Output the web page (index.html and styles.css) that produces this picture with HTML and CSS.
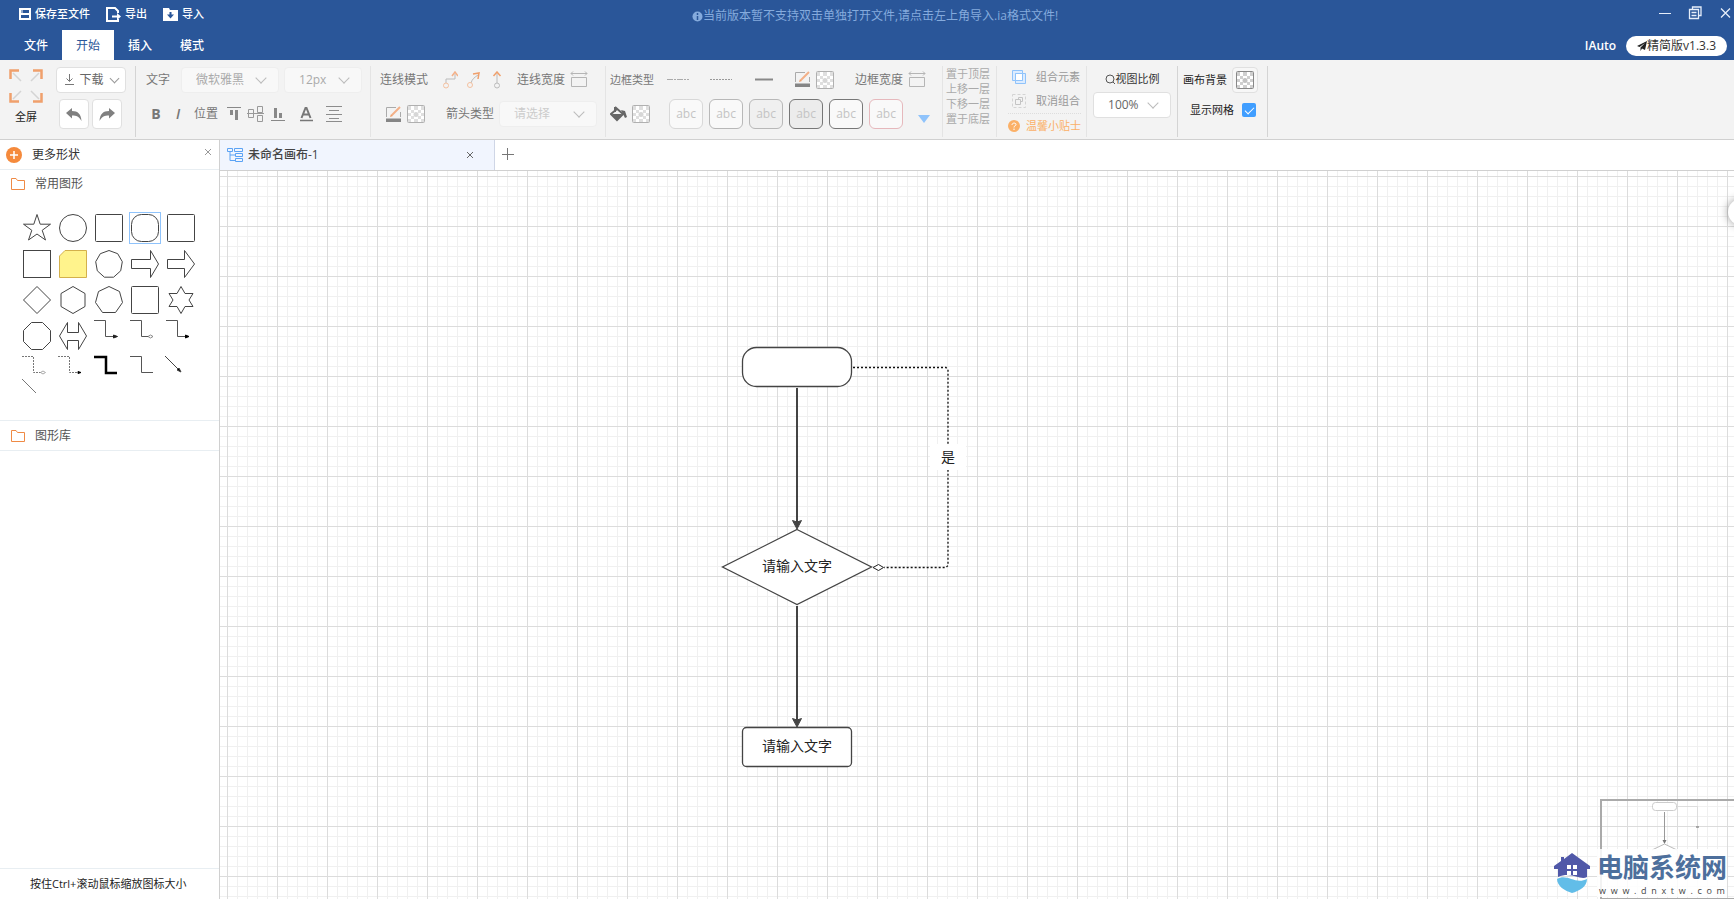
FILE: index.html
```html
<!DOCTYPE html>
<html lang="zh-CN">
<head>
<meta charset="utf-8">
<title>IAuto</title>
<link rel="stylesheet" href="styles.css">
</head>
<body>
<svg class="defs" width="0" height="0" aria-hidden="true">
  <defs>
    <symbol id="checker" viewBox="0 0 18 18">
      <rect x=".5" y=".5" width="17" height="17" rx="1" fill="#fff" stroke="currentColor"/>
      <path d="M1 1h3v4h-3zM7 1h4v4h-4zM14 1h3v4h-3zM4 5h3v3h-3zM11 5h3v3h-3zM1 8h3v3h-3zM14 8h3v3h-3zM4 11h3v3h-3zM11 11h3v3h-3zM1 14h3v3h-3zM7 14h4v3h-4zM14 14h3v3h-3z" fill="currentColor" opacity=".4"/>
      <circle cx="9" cy="9.500" r="2.500" fill="currentColor" opacity=".5"/>
    </symbol>
    <symbol id="pen" viewBox="0 0 17 17">
      <path d="M1.500 11V1.500H11M15.500 6V11" fill="none" stroke="#aaa"/>
      <path d="M7 9L15 1" stroke="#f3b088" stroke-width="2"/>
      <path d="M5 11l1-3 2 2z" fill="#f0a06c"/>
      <path d="M1 12.500h15v3.500h-15z" fill="#858585"/>
    </symbol>
    <symbol id="widthicon" viewBox="0 0 18 18">
      <path d="M1 3.500H17M3 1.500L1 3.500 3 5.500M15 1.500l2 2-2 2M1.500 7.500h15v9h-15z" fill="none" stroke="#b5b5b5"/>
    </symbol>
    <symbol id="folder" viewBox="0 0 15 14">
      <path d="M.5 1.500H5L6.500 3.500H13.500V12.500H.5z" fill="none" stroke="#ef8a45"/>
    </symbol>
    <symbol id="elbow" viewBox="0 0 36 22">
      <path d="M3 2.500H14.500V18.500H26" fill="none" stroke="currentColor"/>
    </symbol>
  </defs>
</svg>

<header class="header">
  <div class="titlebar">
    <nav class="quick">
      <button><svg width="12" height="12" viewBox="0 0 12 12"><path d="M1 1h10v10H1zM1 6h10" fill="none" stroke="#fff" stroke-width="2"/><path d="M3 1v5" stroke="#fff"/></svg>保存至文件</button>
      <button><svg width="15" height="15" viewBox="0 0 15 15"><path d="M12 6V4L9 1H1V14H12V12" fill="none" stroke="#fff" stroke-width="2"/><path d="M6 9.500H12" stroke="#fff" stroke-width="2"/><path d="M11 6l4 3.500-4 3.500z" fill="#fff"/></svg>导出</button>
      <button><svg width="15" height="13" viewBox="0 0 15 13"><path d="M0 0h6l1 2h8v11H0z" fill="#fff"/><path d="M6.500 4h2v2.500h2.500L7.500 10.500 4 6.500h2.500z" fill="#2a5699"/></svg>导入</button>
    </nav>
    <p class="notice"><svg width="11" height="11" viewBox="0 0 11 11"><circle cx="5.500" cy="5.500" r="5" fill="#85abdd"/><path d="M5.500 2v2M5.500 5v4" stroke="#2a5699" stroke-width="1.500"/></svg>当前版本暂不支持双击单独打开文件,请点击左上角导入.ia格式文件!</p>
    <div class="window-buttons">
      <button aria-label="最小化"><svg width="14" height="14" viewBox="0 0 14 14"><path d="M1 7.500h12" stroke="#e6eefa"/></svg></button>
      <button aria-label="还原"><svg width="14" height="14" viewBox="0 0 14 14"><path d="M4.500 3V1H13V9.500H11M1.500 3.500h9v9h-9zM3.500 6.500h5M3.500 9.500h5" fill="none" stroke="#e6eefa" stroke-width="1.300"/></svg></button>
      <button aria-label="关闭"><svg width="14" height="14" viewBox="0 0 14 14"><path d="M3 2.500l9 9M12 2.500l-9 9" stroke="#e6eefa" stroke-width="1.300"/></svg></button>
    </div>
  </div>
  <div class="menubar">
    <nav class="tabs">
      <button>文件</button>
      <button class="active">开始</button>
      <button>插入</button>
      <button>模式</button>
    </nav>
    <div class="brand">
      <strong>IAuto</strong>
      <span class="version"><svg width="10" height="10" viewBox="0 0 10 10"><path d="M10 0L8 9 5 7.500 3.500 10V6.500L8 2 2.500 6 0 5z" fill="#222"/></svg>精简版v1.3.3</span>
    </div>
  </div>
</header>

<section class="toolbar">
  <div class="group g-file">
    <button class="fullscreen">
      <svg width="34" height="34" viewBox="0 0 34 34"><path d="M1.500 10V1.500H10M24 1.500H32.500V10M32.500 24V32.500H24M10 32.500H1.500V24" fill="none" stroke="#f0a06c" stroke-width="2.500"/><path d="M4 4l8 8M30 4l-8 8M30 30l-8-8M4 30l8-8" stroke="#d4d4d4" stroke-width="1.500"/></svg>
      全屏
    </button>
    <div class="rows">
      <div class="row"><button class="box download"><svg width="11" height="11" viewBox="0 0 11 11"><path d="M5.500 0V7M2.500 4.500l3 3 3-3M1 10.500h9" fill="none" stroke="#777"/></svg>下载<i class="chevron"></i></button></div>
      <div class="row history">
        <button class="box" aria-label="撤销"><svg width="16" height="13" viewBox="0 0 16 13"><path d="M0 5L6 0V3C12 3 15 6 15.500 13 13 8.500 10.500 7.500 6 7.500V10.500z" fill="#808080"/></svg></button>
        <button class="box" aria-label="重做"><svg width="16" height="13" viewBox="0 0 16 13"><path d="M16 5L10 0V3C4 3 1 6 .5 13 3 8.500 5.500 7.500 10 7.500V10.500z" fill="#808080"/></svg></button>
      </div>
    </div>
  </div>

  <div class="group g-text">
    <div class="rows">
      <div class="row">
        <label for="font" class="push-r">文字</label>
        <span class="select faded w98"><select id="font" disabled><option>微软雅黑</option></select></span>
        <span class="select faded w78"><select aria-label="字号" disabled><option>12px</option></select></span>
      </div>
      <div class="row format">
        <button aria-label="加粗"><b>B</b></button>
        <button aria-label="斜体"><em>I</em></button>
        <span class="pos">位置</span>
        <button aria-label="顶部对齐"><svg width="14" height="14" viewBox="0 0 14 14"><path d="M0 .5h14" stroke="#888"/><path d="M4.500 3v5M9.500 3v10" stroke="#888" stroke-width="3"/></svg></button>
        <button aria-label="居中对齐"><svg width="18" height="16" viewBox="0 0 18 16"><path d="M1.500 3.500h5v8h-5zM10.500 .5h5v6h-5zM10.500 9.500h5v6h-5zM0 7.500h17" fill="none" stroke="#999"/></svg></button>
        <button aria-label="底部对齐"><svg width="14" height="14" viewBox="0 0 14 14"><path d="M0 13.500h14" stroke="#888"/><path d="M4.500 1v10M9.500 6v5" stroke="#888" stroke-width="3"/></svg></button>
        <button class="ml" aria-label="文字颜色"><svg width="14" height="15" viewBox="0 0 14 15"><path d="M2.500 11L6.500 1h1l4 10M4 7.500h6" fill="none" stroke="#777" stroke-width="2"/><path d="M1 13.500h13" stroke="#777" stroke-width="1.500"/></svg></button>
        <button class="ml" aria-label="对齐"><svg width="16" height="16" viewBox="0 0 16 16"><path d="M0 .5h16M3 4.500h10M0 8.500h16M3 12.500h10M0 15.500h16" stroke="#8c8c8c"/></svg></button>
      </div>
    </div>
  </div>

  <div class="group g-line">
    <div class="rows">
      <div class="row">
        <span>连线模式</span>
        <svg class="m10" width="15" height="18" viewBox="0 0 15 18"><path d="M3 12V8H12V3" fill="none" stroke="#bbb"/><path d="M9 5l3-4 3 4" fill="none" stroke="#f3b088" stroke-width="1.500"/><circle cx="3" cy="14.500" r="2.500" fill="none" stroke="#f3c09f"/></svg>
        <svg class="m4" width="14" height="16" viewBox="0 0 14 16"><path d="M4 11C5 7 8 5 11 3" fill="none" stroke="#bbb"/><path d="M6 2l6-1-1 6" fill="none" stroke="#f0a06c" stroke-width="1.500"/><circle cx="3" cy="13" r="2.500" fill="none" stroke="#f3c09f"/></svg>
        <svg class="m4" width="14" height="18" viewBox="0 0 14 18"><path d="M7 12V2" stroke="#bbb"/><path d="M3.500 5L7 1l3.500 4" fill="none" stroke="#f0a06c" stroke-width="1.500"/><circle cx="7" cy="14.500" r="2.500" fill="none" stroke="#bbb"/></svg>
        <span class="m8">连线宽度</span>
        <svg width="18" height="20" viewBox="0 0 18 20"><use href="#widthicon" width="18" height="18"/></svg>
      </div>
      <div class="row indent">
        <svg width="17" height="17"><use href="#pen"/></svg>
        <svg class="gray" width="18" height="18"><use href="#checker"/></svg>
        <label for="arrow" class="m16">箭头类型</label>
        <span class="select faded pale w98"><select id="arrow" disabled><option>请选择</option></select></span>
      </div>
    </div>
  </div>

  <div class="group g-border">
    <div class="rows">
      <div class="row">
        <span class="small">边框类型</span>
        <svg class="m8" width="22" height="3"><path d="M0 1.500h22" stroke="#aaa" stroke-dasharray="6 1 2 1"/></svg>
        <svg class="m16" width="22" height="3"><path d="M0 1.500h22" stroke="#999" stroke-dasharray="2 1"/></svg>
        <svg class="m18" width="18" height="3"><path d="M0 1.500h18" stroke="#888" stroke-width="2"/></svg>
        <svg class="m16" width="17" height="17"><use href="#pen"/></svg>
        <svg class="gray" width="18" height="18"><use href="#checker"/></svg>
        <span class="m16">边框宽度</span>
        <svg width="18" height="20" viewBox="0 0 18 20"><use href="#widthicon" width="18" height="18"/></svg>
      </div>
      <div class="row">
        <svg width="17" height="16" viewBox="0 0 17 16"><path d="M5 1V6M5 1L13 8 7 14 1 8 7 3" fill="none" stroke="#666" stroke-width="2"/><path d="M2 8h10l-5 6zM11 4l4 1 2 6-2 1-2-4z" fill="#666"/></svg>
        <svg class="gray" width="18" height="18"><use href="#checker"/></svg>
        <div class="swatches">
          <button class="s1">abc</button><button class="s2">abc</button><button class="s3">abc</button><button class="s4">abc</button><button class="s5">abc</button><button class="s6">abc</button>
        </div>
        <svg class="m10 drop" width="12" height="8" viewBox="0 0 12 8"><path d="M0 0h12l-6 8z" fill="#8fc3fb"/></svg>
      </div>
    </div>
  </div>

  <div class="group g-layer">
    <button>置于顶层</button>
    <button>上移一层</button>
    <button>下移一层</button>
    <button>置于底层</button>
  </div>

  <div class="group g-combine">
    <button><svg width="14" height="14" viewBox="0 0 14 14"><path d="M.5 .5h10v10h-10zM3.500 3.500h10v10h-10z" fill="#dcecff" stroke="#8fc3fb"/><path d="M3.500 3.500h7v7h-7z" fill="#fff" stroke="#8fc3fb"/></svg>组合元素</button>
    <button><svg width="14" height="14" viewBox="0 0 14 14"><path d="M.5 .5h13v13h-13z" fill="none" stroke="#d4d4d4" stroke-dasharray="3 2"/><path d="M3.500 5.500h5v5h-5zM6.500 5V3.500h4v4H9" fill="none" stroke="#c4c4c4"/></svg>取消组合</button>
    <button class="tip"><svg width="12" height="12" viewBox="0 0 12 12"><circle cx="6" cy="6" r="6" fill="#fbb067"/><path d="M4 5C4 2.500 8 2.500 8 4.500 8 6 6 5.500 6 7.500M6 8.500V10" fill="none" stroke="#fff"/></svg>温馨小贴士</button>
  </div>

  <div class="group g-zoom">
    <label for="zoom"><svg width="11" height="11" viewBox="0 0 11 11"><circle cx="5" cy="5" r="4" fill="none" stroke="#555"/><path d="M8 8l2 2" stroke="#555"/></svg>视图比例</label>
    <span class="select"><select id="zoom"><option>100%</option></select></span>
  </div>

  <div class="group g-view">
    <div class="row"><span>画布背景</span><button class="box" aria-label="画布背景"><svg width="18" height="18"><use href="#checker"/></svg></button></div>
    <label class="row grid-toggle">显示网格<input type="checkbox" checked></label>
  </div>
</section>

<div class="workspace">
  <aside class="sidebar">
    <div class="side-head">
      <svg width="16" height="16" viewBox="0 0 16 16"><circle cx="8" cy="8" r="8" fill="#f58a3c"/><path d="M8 4v8M4 8h8" stroke="#fff" stroke-width="1.500"/></svg>
      <span>更多形状</span>
      <button aria-label="关闭"><svg width="8" height="8" viewBox="0 0 8 8"><path d="M1 1l6 6M7 1L1 7" stroke="#999"/></svg></button>
    </div>
    <div class="section-title"><svg width="15" height="14"><use href="#folder"/></svg>常用图形</div>
    <div class="shapes">
      <svg viewBox="0 0 36 36"><path d="M18 4.500L21.200 14.200 31.500 14.200 23.200 20.300 26.500 30 18 24 9.500 30 12.800 20.300 4.500 14.200 14.800 14.200z"/></svg>
      <svg viewBox="0 0 36 36"><circle cx="18" cy="18" r="13.500"/></svg>
      <svg viewBox="0 0 36 36"><rect x="4.500" y="4.500" width="27" height="27" rx="1"/></svg>
      <svg viewBox="0 0 36 36"><rect x="2.500" y="2.500" width="31" height="31" stroke="#8fc3fb"/><rect x="4.500" y="4.500" width="27" height="27" rx="10"/></svg>
      <svg viewBox="0 0 36 36"><rect x="4.500" y="4.500" width="27" height="27" rx="1"/></svg>
      <svg viewBox="0 0 36 36"><rect x="4.500" y="4.500" width="27" height="27"/></svg>
      <svg viewBox="0 0 36 36"><path d="M10 4.500H31.500V31.500H4.500V10z" fill="#fff38c" stroke="#d3b04c"/></svg>
      <svg viewBox="0 0 36 36"><path d="M18 4.500L26.700 7.700 31.300 15.700 29.700 24.800 22.600 31.200H13.400L6.300 24.800 4.700 15.700 9.300 7.700z"/></svg>
      <svg viewBox="0 0 36 36"><path d="M4.500 13.500H23.500V4.500L31.500 18 23.500 31.500V22.500H4.500z"/></svg>
      <svg viewBox="0 0 36 36"><path d="M4.500 13.500H21.500V4.500L31.500 18 21.500 31.500V22.500H4.500z"/></svg>
      <svg viewBox="0 0 36 36"><path d="M18 4.500L31.500 18 18 31.500 4.500 18z"/></svg>
      <svg viewBox="0 0 36 36"><path d="M18 4.500L30 11.500V24.500L18 31.500 6 24.500V11.500z"/></svg>
      <svg viewBox="0 0 36 36"><path d="M18 4.500L28.500 9.500 31.500 20.500 24.500 30.500H11.500L4.500 20.500 7.500 9.500z"/></svg>
      <svg viewBox="0 0 36 36"><rect x="4.500" y="4.500" width="27" height="27" rx="1"/></svg>
      <svg viewBox="0 0 36 36"><path d="M18 4.500L22 11.500H30L26 18 30 24.500H22L18 31.500 14 24.500H6L10 18 6 11.500H14z"/></svg>
      <svg viewBox="0 0 36 36"><path d="M12.500 4.500H23.500L31.500 12.500V23.500L23.500 31.500H12.500L4.500 23.500V12.500z"/></svg>
      <svg viewBox="0 0 36 36"><path d="M4.500 18L12.500 4.500V14.500H23.500V4.500L31.500 18 23.500 31.500V22.500H12.500V31.500z"/></svg>
      <svg class="link" viewBox="0 0 36 22"><use href="#elbow" width="36" height="22"/><path d="M22.500 17l4 1.500-4 1.500z" fill="#222" stroke="#222"/></svg>
      <svg class="link" viewBox="0 0 36 22"><use href="#elbow" width="36" height="22"/><path d="M21 18.500l2.500-1.500 2.500 1.500-2.500 1.500z" fill="#fff" stroke="#888"/></svg>
      <svg class="link" viewBox="0 0 36 22"><use href="#elbow" width="36" height="22"/><path d="M22.500 17l3.500 1.500-3.500 1.500z" fill="#000" stroke="#000"/></svg>
      <svg class="link" viewBox="0 0 36 22"><path d="M3 2.500H14.500V18.500H26" stroke="#777" stroke-dasharray="2 1"/><path d="M21.500 18.500l2.500-1.500 2.500 1.500-2.500 1.500z" fill="#fff" stroke="#aaa"/></svg>
      <svg class="link" viewBox="0 0 36 22"><path d="M3 2.500H14.500V18.500H26" stroke="#777" stroke-dasharray="2 1"/><path d="M23 17.500l3 1-3 1z" fill="#000" stroke="#000"/></svg>
      <svg class="link" viewBox="0 0 36 22"><path d="M3 3H15V19H26" stroke="#000" stroke-width="2.500"/></svg>
      <svg class="link" viewBox="0 0 36 22"><use href="#elbow" width="36" height="22"/></svg>
      <svg class="link" viewBox="0 0 36 22"><path d="M2 2L17 17"/><path d="M18 18l-4-2 2-2z" fill="#000"/></svg>
      <svg class="link" viewBox="0 0 36 22"><path d="M3 3L17 17" stroke="#777"/></svg>
    </div>
    <div class="section-title lined"><svg width="15" height="14"><use href="#folder"/></svg>图形库</div>
    <p class="hint">按住Ctrl+滚动鼠标缩放图标大小</p>
  </aside>

  <main class="main">
    <div class="doc-tabs">
      <div class="doc-tab">
        <svg width="17" height="15" viewBox="0 0 17 15"><path d="M.5 .5h5v3h-5zM7.500 .5h8v3h-8zM8.500 5.500h7v3h-7zM8.500 10.500h7v3h-7zM3 4v8.500h5M3 7h5" fill="none" stroke="#5ba3f5"/></svg>
        <span>未命名画布-1</span>
        <button aria-label="关闭画布"><svg width="8" height="8" viewBox="0 0 8 8"><path d="M1 1l6 6M7 1L1 7" stroke="#666"/></svg></button>
      </div>
      <button class="add" aria-label="新建画布"><svg width="12" height="12" viewBox="0 0 12 12"><path d="M5.500 0v12M0 6.500h12" stroke="#777"/></svg></button>
    </div>
    <div class="canvas">
      <svg class="diagram" width="1000" height="700">
        <g transform="translate(-220 -171)" fill="none" stroke="#444">
          <rect x="742.500" y="347.500" width="109" height="39" rx="14" fill="#fff" stroke-width="1.300"/>
          <path d="M797 388V524M797 606V722" stroke-width="2"/>
          <path d="M792.500 520.500L797 522 801.500 520.500 797 529zM792.500 718.500L797 720 801.500 718.500 797 727z" fill="#444" stroke-width="1"/>
          <path d="M797 529.500L871.500 567 797 604.500 722.500 567z" fill="#fff" stroke-width="1.300"/>
          <rect x="742.500" y="727.500" width="109" height="39" rx="4" fill="#fff" stroke-width="1.300"/>
          <path d="M853 367.500H946L948 369.500V565.500L946 567.500H884" stroke="#111" stroke-width="1.300" stroke-dasharray="2 2"/>
          <path d="M873 567.500l5.500-3 5 3-5 3z" fill="#fff" stroke="#222"/>
          <rect x="930" y="444" width="36" height="26" fill="#fff" stroke="none"/>
          <g class="labels">
            <text x="948" y="462">是</text>
            <text x="797" y="571">请输入文字</text>
            <text x="797" y="751">请输入文字</text>
          </g>
        </g>
      </svg>
      <button class="handle" aria-label="展开面板"></button>
      <div class="minimap">
        <svg width="132" height="98" viewBox="0 0 132 98"><rect x="50.500" y="1.500" width="24" height="8" rx="3" fill="#fff" stroke="#ccc"/><path d="M76 5.500H95.500V55H80" fill="none" stroke="#ddd"/><path d="M62.500 11V42" stroke="#999"/><path d="M60.500 39h4l-2 4z" fill="#777"/><path d="M50 49L62.500 43 75 49" fill="#fff" stroke="#bbb"/><path d="M94 26h3" stroke="#666"/></svg>
      </div>
      <div class="watermark">
        <svg width="38" height="42" viewBox="0 0 38 42"><path d="M19 1L37 14V17H34V25C27 29 19 19 5 25V17H1V14L8 9V5H11V7z" fill="#5058a8"/><path d="M14 13h4v4h-4zM20 13h4v4h-4zM14 19h4v4h-4zM20 19h4v4h-4z" fill="#fff"/><path d="M4 27C14 21 22 33 34 27 34 35 26 39 19 41 12 39 4 34 4 27z" fill="#62bde8"/></svg>
        <div class="site"><strong>电脑系统网</strong><small>w  w  w  .  d  n  x  t  w  .  c  o  m</small></div>
      </div>
    </div>
  </main>
</div>
</body>
</html>
```
FILE: styles.css
```css
* { box-sizing: border-box; }
body {
  margin: 0;
  min-height: 100vh;
  display: flex;
  flex-direction: column;
  overflow: hidden;
  font: 12px/16px "Open Sans", "Noto Sans CJK SC", sans-serif;
  color: #333;
  background: #fff;
}
.defs { position: absolute; }
button { font: inherit; color: inherit; background: none; border: 0; padding: 0; white-space: nowrap; }
p { margin: 0; }
svg { display: block; flex: none; }
label, span { white-space: nowrap; }

/* Header */
.header { background: #2a5699; color: #fff; }
.titlebar { height: 30px; display: grid; grid-template-columns: 1fr auto 1fr; align-items: center; }
.quick { display: flex; gap: 16px; padding: 0 0 2px 19px; font-size: 11px; font-weight: 500; }
.quick button { display: flex; align-items: center; gap: 4px; }
.notice { display: flex; align-items: center; color: #85abdd; padding: 2px 0 0 16px; }
.window-buttons { display: flex; justify-content: flex-end; gap: 16px; padding: 0 2px 4px 0; }
.menubar { height: 30px; display: flex; justify-content: space-between; padding: 0 7px 0 10px; }
.tabs { display: flex; font-weight: 500; }
.tabs button { width: 52px; padding-top: 2px; }
.tabs .active { background: #fff; color: #2a5699; font-weight: 400; }
.brand { display: flex; align-items: center; gap: 10px; padding-top: 1px; }
.brand strong { font-weight: 600; }
.version { display: flex; align-items: center; height: 20px; padding: 0 11px; border-radius: 10px; background: #fff; color: #333; }

/* Toolbar */
.toolbar { display: flex; height: 80px; padding: 6px 0 2px; background: #f3f3f3; border-bottom: 1px solid #d0d0d0; color: #777; }
.group { display: flex; flex: none; border-right: 1px solid #e4e4e4; }
.rows { display: flex; flex-direction: column; gap: 5px; }
.row { display: flex; align-items: center; gap: 5px; height: 27px; }
.rows .row + .row { height: 32px; }
.small { font-size: 11px; }
.gray { color: #b0b0b0; }
.m4 { margin-left: 4px; }
.m8 { margin-left: 8px; }
.m10 { margin-left: 10px; }
.m16 { margin-left: 16px; }
.m18 { margin-left: 18px; }
.push-r { margin-right: 6px; }
.box { display: flex; align-items: center; justify-content: center; background: #fff; border: 1px solid #e0e0e0; border-radius: 4px; }
.chevron, .select::after { content: ""; width: 7px; height: 7px; border: solid #bbb; border-width: 0 1px 1px 0; transform: rotate(45deg); }
.select { position: relative; height: 26px; background: #fff; border: 1px solid #e0e0e0; border-radius: 4px; }
.select::after { position: absolute; right: 13px; top: 6px; pointer-events: none; }
.select select { appearance: none; width: 100%; height: 100%; border: 0; background: none; padding: 0 0 0 14px; font: inherit; color: #666; opacity: 1; }
.faded { background: #f8f8f8; border-color: #eee; }
.faded select { color: #aaa; }
.pale select { color: #ccc; }
.w98 { width: 98px; }
.w78 { width: 78px; }

.g-file { padding: 0 9px; gap: 13px; border-color: #d4d4d4; }
.fullscreen { display: flex; flex-direction: column; align-items: center; gap: 6px; padding-top: 3px; font-size: 11px; line-height: 16px; color: #222; }
.download { width: 70px; height: 26px; gap: 4px; color: #666; }
.download .chevron { margin: 0 0 3px 3px; border-color: #999; }
.history { padding-left: 3px; }
.history .box { width: 30px; height: 30px; }
.history.row { gap: 3px; }

.g-text { padding: 0 8px 0 10px; }
.format.row { gap: 2px; }
.format button { width: 20px; display: flex; justify-content: center; font-size: 14px; }
.format em { font-weight: 600; }
.format .pos { padding: 0 4px; }
.format .ml { margin-left: 6px; }

.g-line { padding: 0 8px 0 9px; }
.indent { padding-left: 5px; }
.g-border { padding: 0 12px 0 4px; }
.swatches { display: flex; gap: 6px; margin-left: 14px; }
.swatches button { width: 34px; height: 30px; border: 1px solid #ccc; border-radius: 6px; background: #f9f9f9; color: #c4c4c4; }
.swatches .s1 { border-color: #d8d8d8; }
.swatches .s2 { border-color: #b8b8b8; }
.swatches .s3 { border-color: #b8b8b8; background: #f0f0f0; }
.swatches .s4 { border-color: #777; background: #ececec; }
.swatches .s5 { border-color: #777; }
.swatches .s6 { border-color: #e6b8bc; }
.drop { align-self: flex-end; margin-bottom: 7px; }

.g-layer { flex-direction: column; padding: 0 6px 0 3px; font-size: 11px; line-height: 15px; color: #aaa; }
.g-combine { flex-direction: column; padding: 0 5px 0 11px; font-size: 11px; color: #999; }
.g-combine button { display: flex; align-items: center; gap: 10px; height: 25px; padding-left: 4px; }
.g-combine button:first-child { height: 22px; }
.g-combine .tip { gap: 6px; height: 24px; padding: 0; border-top: 1px dotted #ddd; color: #fbb067; }
.g-zoom { flex-direction: column; width: 91px; padding: 5px 6px 0 6px; gap: 5px; }
.g-zoom, .g-view { border-color: #d4d4d4; }
.g-zoom label { display: flex; align-items: center; justify-content: center; font-size: 11px; color: #333; }
.g-view { flex-direction: column; padding: 0 9px 0 5px; font-size: 11px; color: #222; }
.g-view .box { width: 26px; height: 26px; background: #f7f7f7; color: #888; }
.grid-toggle.row { gap: 8px; height: 33px; padding-left: 7px; }
.grid-toggle input { appearance: none; position: relative; width: 14px; height: 14px; margin: 0; border-radius: 2px; background: #409eff; }
.grid-toggle input:checked::after { content: ""; position: absolute; left: 5px; top: 2px; width: 4px; height: 8px; border: solid #fff; border-width: 0 1px 1px 0; transform: rotate(45deg); }

/* Sidebar */
.workspace { flex: 1; display: flex; }
.sidebar { flex: none; width: 220px; display: flex; flex-direction: column; border-right: 1px solid #d0d0d0; }
.side-head { display: flex; align-items: center; gap: 10px; height: 30px; padding: 0 7px 0 6px; border-bottom: 1px solid #e8eef2; }
.side-head button { margin: 0 0 6px auto; }
.section-title { display: flex; align-items: center; gap: 9px; height: 28px; padding-left: 11px; color: #555; }
.section-title.lined { height: 31px; border: solid #e8eef2; border-width: 1px 0; }
.shapes { display: grid; grid-template-columns: repeat(5, 36px); align-items: start; padding: 12px 0 22px 19px; }
.shapes svg { width: 36px; height: 36px; fill: none; stroke: #444; color: #555; }
.shapes .link { height: 22px; }
.hint { margin-top: auto; height: 31px; border-top: 1px solid #e8eef2; padding-left: 30px; font-size: 11px; line-height: 30px; color: #222; }

/* Canvas */
.main { flex: 1; display: flex; flex-direction: column; min-width: 0; }
.doc-tabs { display: flex; align-items: center; height: 31px; border-bottom: 1px solid #d0d0d0; }
.doc-tab { display: flex; align-items: center; gap: 4px; width: 275px; height: 30px; padding: 0 20px 0 7px; background: #f1f5fe; border-right: 1px solid #cfd6e6; font-weight: 500; color: #444; }
.doc-tab button { margin-left: auto; }
.add { padding: 0 7px 2px; }
.canvas {
  position: relative;
  flex: 1;
  overflow: hidden;
  background-image:
    linear-gradient(90deg, #dcdcdc 1px, transparent 1px),
    linear-gradient(#dcdcdc 1px, transparent 1px),
    linear-gradient(90deg, #f0f0f0 1px, transparent 1px),
    linear-gradient(#f0f0f0 1px, transparent 1px);
  background-size: 50px 50px, 50px 50px, 10px 10px, 10px 10px;
  background-position: 7px 5px;
}
.diagram { position: absolute; left: 0; top: 0; }
.labels text { fill: #222; stroke: none; font-size: 14px; text-anchor: middle; }
.handle { position: absolute; right: -20px; top: 28px; width: 26px; height: 26px; border-radius: 50%; background: #fff; box-shadow: 0 0 10px rgba(0, 0, 0, .4); }
.minimap { position: absolute; right: 0; bottom: 0; width: 134px; height: 100px; border: solid #aaa; border-width: 2px 0 1px 2px; }
.watermark { position: absolute; right: 7px; bottom: 2px; display: flex; align-items: center; gap: 6px; }
.site { display: flex; flex-direction: column; align-items: center; background: rgba(255, 255, 255, .85); }
.site strong { font-size: 26px; line-height: 36px; font-weight: 700; color: #4d6f9c; }
.site small { font-size: 9px; line-height: 12px; white-space: pre; color: #444; }
```
